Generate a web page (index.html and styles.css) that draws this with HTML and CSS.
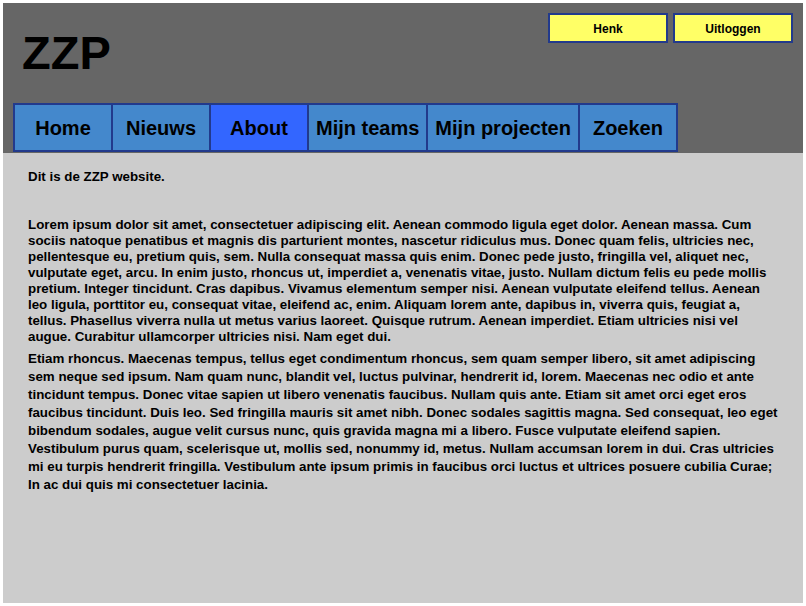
FILE: index.html
```html
<!DOCTYPE html>
<html lang="nl">
<head>
<meta charset="utf-8">
<title>ZZP</title>
<link rel="stylesheet" href="styles.css">
</head>
<body>
<div class="page">
  <header class="header">
    <div class="topbar">
      <h1 class="logo">ZZP</h1>
      <div class="user-actions">
        <button class="btn" type="button">Henk</button>
        <button class="btn" type="button">Uitloggen</button>
      </div>
    </div>
    <nav class="nav">
      <a class="tab" href="#">Home</a>
      <a class="tab" href="#">Nieuws</a>
      <a class="tab tab-active" href="#">About</a>
      <a class="tab" href="#">Mijn teams</a>
      <a class="tab" href="#">Mijn projecten</a>
      <a class="tab" href="#">Zoeken</a>
    </nav>
  </header>
  <main class="content">
    <p class="intro">Dit is de ZZP website.</p>
    <p class="text">Lorem ipsum dolor sit amet, consectetuer adipiscing elit. Aenean commodo ligula eget dolor. Aenean massa. Cum sociis natoque penatibus et magnis dis parturient montes, nascetur ridiculus mus. Donec quam felis, ultricies nec, pellentesque eu, pretium quis, sem. Nulla consequat massa quis enim. Donec pede justo, fringilla vel, aliquet nec, vulputate eget, arcu. In enim justo, rhoncus ut, imperdiet a, venenatis vitae, justo. Nullam dictum felis eu pede mollis pretium. Integer tincidunt. Cras dapibus. Vivamus elementum semper nisi. Aenean vulputate eleifend tellus. Aenean leo ligula, porttitor eu, consequat vitae, eleifend ac, enim. Aliquam lorem ante, dapibus in, viverra quis, feugiat a, tellus. Phasellus viverra nulla ut metus varius laoreet. Quisque rutrum. Aenean imperdiet. Etiam ultricies nisi vel augue. Curabitur ullamcorper ultricies nisi. Nam eget dui.</p>
    <p class="text text-loose">Etiam rhoncus. Maecenas tempus, tellus eget condimentum rhoncus, sem quam semper libero, sit amet adipiscing sem neque sed ipsum. Nam quam nunc, blandit vel, luctus pulvinar, hendrerit id, lorem. Maecenas nec odio et ante tincidunt tempus. Donec vitae sapien ut libero venenatis faucibus. Nullam quis ante. Etiam sit amet orci eget eros faucibus tincidunt. Duis leo. Sed fringilla mauris sit amet nibh. Donec sodales sagittis magna. Sed consequat, leo eget bibendum sodales, augue velit cursus nunc, quis gravida magna mi a libero. Fusce vulputate eleifend sapien. Vestibulum purus quam, scelerisque ut, mollis sed, nonummy id, metus. Nullam accumsan lorem in dui. Cras ultricies mi eu turpis hendrerit fringilla. Vestibulum ante ipsum primis in faucibus orci luctus et ultrices posuere cubilia Curae; In ac dui quis mi consectetuer lacinia.</p>
  </main>
</div>
</body>
</html>
```
FILE: styles.css
```css
* {
  box-sizing: border-box;
}

html, body {
  background: #ffffff;
}

body {
  margin: 3px;
  font-family: "Liberation Sans", Arial, sans-serif;
  color: #000000;
}

.page {
  width: 800px;
  height: 600px;
  background: #cccccc;
  display: flex;
  flex-direction: column;
}

.header {
  background: #666666;
  padding: 10px 10px 1px 10px;
  display: flex;
  flex-direction: column;
}

.topbar {
  height: 90px;
  display: flex;
  justify-content: space-between;
  align-items: flex-start;
}

.logo {
  margin: 16px 0 0 9px;
  font-size: 47px;
  line-height: 48px;
  font-weight: bold;
}

.user-actions {
  display: flex;
  gap: 5px;
}

.btn {
  width: 120px;
  height: 30px;
  background: #ffff66;
  border: 2px solid #223a8c;
  font-family: "Liberation Sans", Arial, sans-serif;
  font-size: 12px;
  font-weight: bold;
  color: #000000;
  padding: 1px 0 0 0;
  margin: 0;
}

.nav {
  display: flex;
  height: 49px;
}

.tab {
  display: block;
  box-sizing: content-box;
  height: 43px;
  min-width: 82px;
  padding: 2px 7px 0 7px;
  border: 2px solid #223a8c;
  border-left: 0;
  background: #4488cc;
  color: #000000;
  text-decoration: none;
  font-size: 20px;
  font-weight: bold;
  line-height: 43px;
  text-align: center;
}

.tab:first-child {
  border-left: 2px solid #223a8c;
}

.tab-active {
  background: #3366ff;
}

.content {
  flex: 1;
  padding: 16px 25px;
  font-size: 13.33px;
  font-weight: bold;
}

.content p {
  margin: 0;
}

.intro {
  line-height: 16px;
  margin-bottom: 32px !important;
}

.text {
  line-height: 16px;
  margin-bottom: 5px !important;
}

.text-loose {
  line-height: 18px;
}
```
